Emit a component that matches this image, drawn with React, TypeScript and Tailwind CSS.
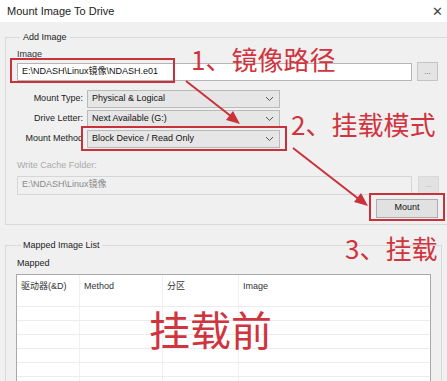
import React from "react";

const ui = { fontFamily: '"Liberation Sans", "Noto Sans CJK SC", sans-serif' };
const cjk = { fontFamily: '"Noto Sans CJK SC", "Noto Sans", sans-serif' };

function Chevron() {
  return (
    <svg width="9" height="6" viewBox="0 0 9 6" className="shrink-0">
      <path d="M1 1 L4.5 4.5 L8 1" fill="none" stroke="#555" strokeWidth="1" />
    </svg>
  );
}

function Select({ value }: { value: string }) {
  return (
    <div className="flex h-[18px] w-[193px] items-center justify-between border border-[#b9b9b9] bg-[#e6e6e6] pl-[4px] pr-[5px] text-[9px] text-[#111]">
      <span>{value}</span>
      <Chevron />
    </div>
  );
}

export default function App() {
  const rows = [0, 1, 2, 3, 4, 5];
  return (
    <div className="relative h-[381px] w-[447px] overflow-hidden bg-[#f0f0f0]" style={ui}>
      {/* title bar */}
      <div className="flex h-[22px] items-center justify-between bg-white pl-[7px] pr-[4px]">
        <span className="text-[11px] text-[#222]">Mount Image To Drive</span>
        <span className="text-[13px] leading-none text-[#444]">✕</span>
      </div>

      {/* Add Image group */}
      <fieldset className="mx-[5px] mt-[9px] h-[194px] border border-[#d9d9d9] px-[11px] pt-[3px]">
        <legend className="ml-[3px] px-[3px] text-[9px] text-[#222]">Add Image</legend>
        <div className="text-[9px] text-[#333]">Image</div>
        <div className="mt-[1px] flex items-center gap-[5px]">
          <div className="flex h-[18px] w-[395px] items-center border border-[#b5b5b5] bg-white pl-[4px] text-[9px] text-[#111]">
            E:\NDASH\Linux镜像\NDASH.e01
          </div>
          <div className="flex h-[19px] w-[21px] items-center justify-center border border-[#c4c4c4] bg-[#e4e4e4] text-[8px] text-[#555]">
            ...
          </div>
        </div>
        <div className="mt-[9px] flex flex-col gap-[2px]">
          {[
            ["Mount Type:", "Physical & Logical"],
            ["Drive Letter:", "Next Available (G:)"],
            ["Mount Method", "Block Device / Read Only"],
          ].map(([l, v]) => (
            <div key={l} className="flex items-center">
              <div className="w-[70px] whitespace-nowrap pr-[4px] text-right text-[9px] text-[#222]">{l}</div>
              <Select value={v} />
            </div>
          ))}
        </div>
        <div className="mt-[11px] text-[9px] text-[#aaa]">Write Cache Folder:</div>
        <div className="mt-[3px] flex items-center gap-[6px]">
          <div className="flex h-[19px] w-[395px] items-center border border-[#d6d6d6] bg-[#f0f0f0] pl-[4px] text-[9px] text-[#888]">
            E:\NDASH\Linux镜像
          </div>
          <div className="flex h-[19px] w-[21px] items-center justify-center border border-[#d8d8d8] bg-[#e2e2e2] text-[8px] text-[#aaa]">
            ...
          </div>
        </div>
        <div className="mt-[4px] flex justify-end pr-[1px]">
          <div className="flex h-[19px] w-[62px] items-center justify-center border border-[#adadad] bg-[#e1e1e1] text-[9px] text-[#111]">
            Mount
          </div>
        </div>
      </fieldset>

      {/* Mapped Image List group */}
      <fieldset className="mx-[5px] mt-[14px] h-[200px] border border-[#d9d9d9] px-[10px] pt-[4px]">
        <legend className="ml-[5px] px-[2px] text-[9px] text-[#222]">Mapped Image List</legend>
        <div className="pl-[1px] text-[9px] text-[#222]">Mapped</div>
        <div className="mt-[4px] border border-[#a9a9a9] bg-white">
          <div className="grid h-[31px] grid-cols-[63px_83px_76px_1fr] text-[9px] text-[#333]">
            <div className="border-r border-[#f0f0f0] pl-[4px] pt-[5px]">驱动器(&amp;D)</div>
            <div className="border-r border-[#f0f0f0] pl-[4px] pt-[5px]">Method</div>
            <div className="border-r border-[#f0f0f0] pl-[4px] pt-[5px]">分区</div>
            <div className="pl-[4px] pt-[5px]">Image</div>
          </div>
          {rows.map((r) => (
            <div key={r} className="grid h-[14px] grid-cols-[63px_83px_76px_1fr] border-t border-[#ececec]">
              <div className="border-r border-[#f0f0f0]" />
              <div className="border-r border-[#f0f0f0]" />
              <div className="border-r border-[#f0f0f0]" />
              <div />
            </div>
          ))}
        </div>
      </fieldset>

      {/* annotations */}
      <div className="pointer-events-none absolute inset-0" style={cjk}>
        <div className="absolute left-[10px] top-[58px] h-[25px] w-[165px] border-2 border-[#c9323b]" />
        <div className="absolute left-[81px] top-[126px] h-[25px] w-[206px] border-2 border-[#c9323b]" />
        <div className="absolute left-[369px] top-[193px] h-[28px] w-[76px] border-2 border-[#c9323b]" />

        <div className="absolute left-[191px] top-[41px] text-[26px] leading-[36px] text-[#d0343e]">1、镜像路径</div>
        <div className="absolute left-[291px] top-[106px] text-[26px] leading-[36px] text-[#d0343e]">2、挂载模式</div>
        <div className="absolute left-[345px] top-[230px] text-[26px] leading-[36px] text-[#d0343e]">3、挂载</div>
        <div className="absolute left-[149px] top-[300px] text-[41px] leading-[56px] text-[#d0343e]">挂载前</div>

        <svg className="absolute inset-0" width="447" height="381" viewBox="0 0 447 381">
          <line x1="186" y1="81" x2="232" y2="117" stroke="#c9323b" strokeWidth="2" />
          <polygon points="240,124 226,120 233,111" fill="#c9323b" />
          <line x1="293" y1="148" x2="360" y2="200" stroke="#c9323b" strokeWidth="2" />
          <polygon points="368,206 354,202 361,193" fill="#c9323b" />
        </svg>
      </div>
    </div>
  );
}
